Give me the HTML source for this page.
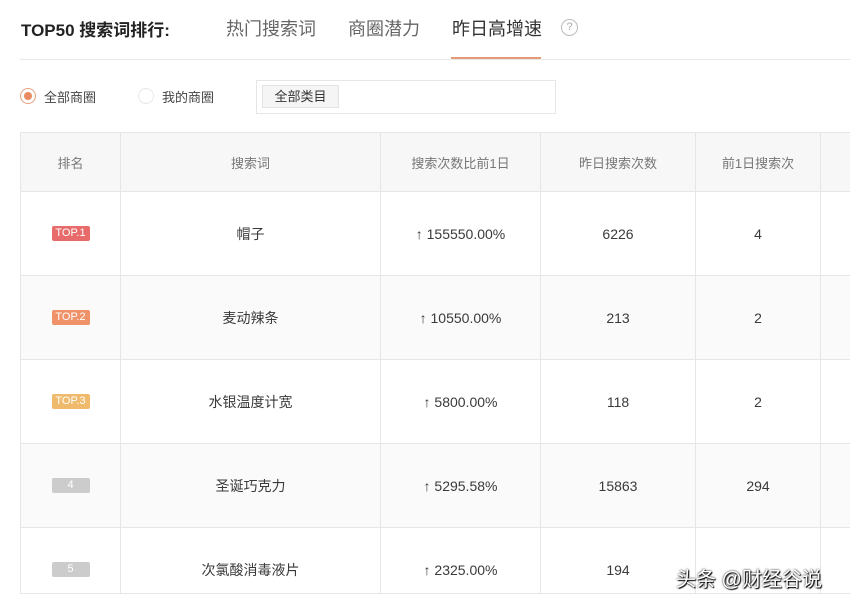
<!DOCTYPE html>
<html><head><meta charset="utf-8"><style>
*{margin:0;padding:0;box-sizing:border-box}
html,body{width:850px;height:606px;overflow:hidden}
body{background:#fff;position:relative;font-family:"Liberation Sans","Noto Sans CJK SC",sans-serif;color:#333}
.a{position:absolute;white-space:nowrap}
.t{font-size:17px;font-weight:bold;color:#222;left:21px;top:16px}
.tab{font-size:18px;color:#666;top:15px}
.cell{position:absolute;display:flex;align-items:center;justify-content:center;font-size:14px;color:#3a3a3a;border-right:1px solid #e6e6e6;border-bottom:1px solid #e6e6e6}
.h{color:#777;font-size:13px;background:#f7f7f7}
.b{display:inline-block;width:38px;height:15px;line-height:15px;font-size:11px;color:#fff;text-align:center;border-radius:2px}
</style></head><body>
<div class="a t">TOP50 搜索词排行:</div>
<div class="a tab" style="left:226px">热门搜索词</div>
<div class="a tab" style="left:348px">商圈潜力</div>
<div class="a tab" style="left:452px;color:#333">昨日高增速</div>
<div class="a" style="left:561px;top:19px;width:17px;height:17px;border:1px solid #bbb;border-radius:50%;font-size:11px;color:#aaa;text-align:center;line-height:15px">?</div>
<div class="a" style="left:20px;top:59px;width:830px;height:1px;background:#e8e8e8"></div>
<div class="a" style="left:451px;top:57px;width:90px;height:2px;background:#e59a78"></div>
<div class="a" style="left:20px;top:88px;width:16px;height:16px;border:1px solid #e8a080;border-radius:50%"><div style="margin:3px;width:8px;height:8px;border-radius:50%;background:#ea8a5e"></div></div>
<div class="a" style="left:44px;top:87px;font-size:13px;color:#444">全部商圈</div>
<div class="a" style="left:138px;top:88px;width:16px;height:16px;border:1px solid #e8e8e8;border-radius:50%"></div>
<div class="a" style="left:162px;top:87px;font-size:13px;color:#444">我的商圈</div>
<div class="a" style="left:256px;top:80px;width:300px;height:34px;border:1px solid #e6e6e6"></div>
<div class="a" style="left:262px;top:85px;width:77px;height:23px;border:1px solid #e3e3e3;background:#f5f5f5;font-size:13px;text-align:center;line-height:21px">全部类目</div>
<div class="a" style="left:0;top:0;width:850px;height:594px;overflow:hidden">
<div class="a" style="left:20px;top:132px;width:830px;height:1px;background:#e6e6e6"></div>
<div class="a" style="left:20px;top:132px;width:1px;height:462px;background:#e6e6e6"></div>
<div id="tb"></div>
<div class="a" style="left:20px;top:593px;width:830px;height:1px;background:#e6e6e6"></div>
</div>
<div class="a" style="left:676px;top:563px;font-size:20px;color:#fff;text-shadow:0 0 2px #000,1px 1px 1px #000">头条 @财经谷说</div>
<script>
var cols=[[21,100],[121,260],[381,160],[541,155],[696,125],[821,40]];
var rows=[["排名","搜索词","搜索次数比前1日","昨日搜索次数","前1日搜索次",""],
["b:TOP.1:#e86b6b","帽子","↑ 155550.00%","6226","4",""],
["b:TOP.2:#ef9169","麦动辣条","↑ 10550.00%","213","2",""],
["b:TOP.3:#f0ba6c","水银温度计宽","↑ 5800.00%","118","2",""],
["b:4:#cccccc","圣诞巧克力","↑ 5295.58%","15863","294",""],
["b:5:#cccccc","次氯酸消毒液片","↑ 2325.00%","194","",""]];
var ys=[133,192,276,360,444,528],hs=[59,84,84,84,84,84],h="";
rows.forEach(function(r,i){r.forEach(function(c,j){
var bg=i==0?"#f7f7f7":(i%2==0?"#fafafa":"#fff");
var txt=c;if(c.indexOf("b:")==0){var p=c.split(":");txt='<span class="b" style="background:'+p[2]+'">'+p[1]+'</span>';}
h+='<div class="cell'+(i==0?' h':'')+'" style="left:'+cols[j][0]+'px;top:'+ys[i]+'px;width:'+cols[j][1]+'px;height:'+hs[i]+'px;background:'+bg+'">'+txt+'</div>';});});
document.getElementById("tb").innerHTML=h;
</script>
</body></html>
